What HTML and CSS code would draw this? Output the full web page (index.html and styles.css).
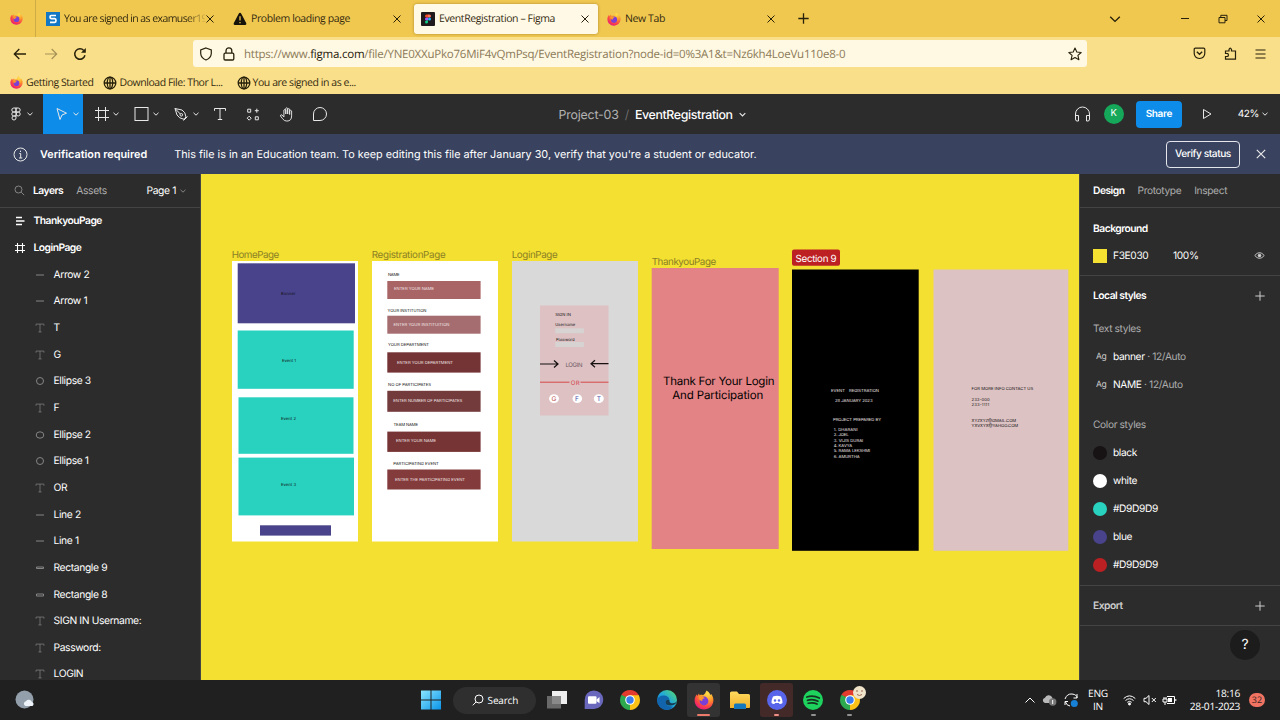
FILE: index.html
```html
<!DOCTYPE html>
<html lang="en">
<head>
<meta charset="utf-8">
<title>EventRegistration – Figma</title>
<link rel="stylesheet" href="styles.css">
</head>
<body>
<svg class="sprite" width="0" height="0">
  <defs>
    <radialGradient id="fxg" cx=".7" cy=".15" r=".95"><stop offset="0" stop-color="#ffe14a"/><stop offset=".4" stop-color="#ff9a2a"/><stop offset=".75" stop-color="#fb3f48"/><stop offset="1" stop-color="#e31587"/></radialGradient>
    <linearGradient id="wing" x1="0" y1="0" x2="1" y2="1"><stop offset="0" stop-color="#8ae6ff"/><stop offset="1" stop-color="#0a94e8"/></linearGradient>
    <linearGradient id="edgeg" x1="0" y1="1" x2="1" y2="0"><stop offset="0" stop-color="#0c59a4"/><stop offset=".5" stop-color="#1fa6dd"/><stop offset="1" stop-color="#5ade6a"/></linearGradient>
    <linearGradient id="foldg" x1="0" y1="0" x2="0" y2="1"><stop offset="0" stop-color="#ffd95e"/><stop offset="1" stop-color="#f2b32c"/></linearGradient>
  </defs>
  <symbol id="firefox" viewBox="0 0 20 20"><path d="M10 19.5C4.600 19.500.6 15.500.6 10.300.6 7.800 1.600 5.600 2.800 4.200L3.100 6 5 3.500 5.600 5.200C7 4.700 8 4.800 9 5.300L11 3.500 12.500.4C15.500 2.200 16 4 16.400 5L17.300 4C19 6.500 19.500 8.600 19.400 10.500 19.200 15.700 15.200 19.500 10 19.500Z" fill="url(#fxg)"/><circle cx="10" cy="11" r="4.400" fill="#7b3fd6"/><path d="M4.500 6.500C7 5.800 9.500 7 11 8.200 8.800 8.300 8 9.500 8.300 11 6.500 11 4.500 9 4.500 6.500Z" fill="#ff9429"/></symbol>
  <symbol id="x" viewBox="0 0 10 10"><path d="M1.500 1.500l7 7M8.500 1.500l-7 7"/></symbol>
  <symbol id="plus" viewBox="0 0 10 10"><path d="M5 .3v9.400M.3 5h9.400"/></symbol>
  <symbol id="chev" viewBox="0 0 8 8"><path d="M1.500 2.800L4 5.200l2.500-2.400"/></symbol>
  <symbol id="globe" viewBox="0 0 14 14"><circle cx="7" cy="7" r="5.800"/><ellipse cx="7" cy="7" rx="2.700" ry="5.800"/><path d="M1.200 7h11.600M7 1.200v11.600"/></symbol>
  <symbol id="text" viewBox="0 0 14 14"><path d="M1.500 3.800V1.500h11v2.300M7 1.500v11M4.800 12.500h4.400"/></symbol>
  <symbol id="frame" viewBox="0 0 14 14"><path d="M3.500 0v14M10.500 0v14M0 3.500h14M0 10.500h14"/></symbol>
  <symbol id="chrome" viewBox="0 0 20 20"><path d="M10 10L1.340 5A10 10 0 0 1 18.660 5Z" fill="#e33b2e"/><path d="M10 10L18.660 5A10 10 0 0 1 10 20Z" fill="#fbc116"/><path d="M10 10L10 20A10 10 0 0 1 1.340 5Z" fill="#2da94f"/><path d="M10 5.300H18.800L14 12.400 10 20 14 12Z" fill="#fbc116"/><path d="M6 12.500L1.340 5 6 7Z" fill="#2da94f"/><circle cx="10" cy="10" r="4.800" fill="#fff"/><circle cx="10" cy="10" r="3.700" fill="#3b7ded"/></symbol>
</svg>

<header class="browser">
  <div class="tabs">
    <div class="pinned"><svg width="13" height="13"><use href="#firefox"/></svg></div>
    <div class="tab"><svg width="14" height="14" viewBox="0 0 14 14"><rect width="14" height="14" fill="#1277c4"/><path d="M10 3.500H5.300Q4 3.500 4 5t1.300 1.700h3.400Q10 6.800 10 8.600t-1.300 1.800H4" fill="none" stroke="#fff" stroke-width="1.700"/></svg><span class="tab-title fade">You are signed in as examuser19</span><svg class="ln close" width="10" height="10"><use href="#x"/></svg></div>
    <div class="tab"><svg width="14" height="14" viewBox="0 0 14 14"><path d="M7 .8Q7.800.8 8.300 1.800L13.300 11.300Q13.800 13 12.200 13H1.800Q.2 13 .7 11.300L5.700 1.800Q6.200.8 7 .8Z" fill="#17130a"/><path d="M7 4.300v4.200M7 10v1.300" stroke="#f2c84e" stroke-width="1.300"/></svg><span class="tab-title">Problem loading page</span><svg class="ln close" width="10" height="10"><use href="#x"/></svg></div>
    <div class="tab active"><svg width="14" height="14" viewBox="0 0 14 14"><rect width="14" height="14" rx="1" fill="#211a1c"/><path d="M5.500 2.500H7v3H5.500a1.500 1.500 0 0 1 0-3Z" fill="#f24e1e"/><path d="M7 2.500h1.500a1.500 1.500 0 0 1 0 3H7Z" fill="#ff7262"/><path d="M5.500 5.500H7v3H5.500a1.500 1.500 0 0 1 0-3Z" fill="#a259ff"/><circle cx="8.500" cy="7" r="1.500" fill="#1abcfe"/><path d="M5.500 8.500H7V10a1.500 1.500 0 1 1-1.500-1.500Z" fill="#0acf83"/></svg><span class="tab-title">EventRegistration – Figma</span><svg class="ln close" width="10" height="10"><use href="#x"/></svg></div>
    <div class="tab"><svg width="14" height="14"><use href="#firefox"/></svg><span class="tab-title">New Tab</span><svg class="ln close" width="10" height="10"><use href="#x"/></svg></div>
    <svg class="ln newtab" width="11" height="11"><use href="#plus"/></svg>
    <div class="window-controls">
      <svg class="ln" width="12" height="12" viewBox="0 0 12 12"><path d="M1.200 3.800L6 8.400l4.800-4.600" stroke-width="1.400"/></svg>
      <svg class="ln" width="10" height="10" viewBox="0 0 10 10"><path d="M1 4.500h8"/></svg>
      <svg class="ln" width="10" height="10" viewBox="0 0 10 10"><path d="M1 3.500h6v5.300H1zM2.800 3.500V1.300H9v5.200H7"/></svg>
      <svg class="ln" width="10" height="10"><use href="#x"/></svg>
    </div>
  </div>
  <div class="nav">
    <svg class="ln back" width="14" height="14" viewBox="0 0 14 14"><path d="M13 7H1.500M6.300 2L1.300 7l5 5" stroke-width="1.300"/></svg>
    <svg class="ln fwd" width="14" height="14" viewBox="0 0 14 14"><path d="M1 7h11.500M7.700 2l5 5-5 5" stroke-width="1.200"/></svg>
    <svg class="ln reload" width="14" height="14" viewBox="0 0 14 14"><path d="M12 8.300A5.200 5.200 0 1 1 10.800 3.500" stroke-width="1.500"/><path d="M12.800 1v4.700H8Z" fill="#27200a" stroke="none"/></svg>
    <div class="urlbar">
      <svg class="ln" width="14" height="14" viewBox="0 0 14 14"><path d="M7 1L12.300 3V6.500Q12 11 7 13 2 11 1.700 6.500V3Z" stroke-width="1.200"/></svg>
      <svg class="ln lock" width="12" height="14" viewBox="0 0 12 14"><rect x="1" y="6.200" width="9.800" height="6.800" rx="1.200" stroke-width="1.300"/><path d="M3 6V3.800a2.900 2.900 0 0 1 5.800 0V6" stroke-width="1.300"/></svg>
      <span class="url">https://www.<b>figma.com</b>/file/YNE0XXuPko76MiF4vQmPsq/EventRegistration?node-id=0%3A1&amp;t=Nz6kh4LoeVu110e8-0</span>
      <svg class="ln star" width="14" height="14" viewBox="0 0 14 14"><path d="M7 1l1.800 4 4.400.5-3.300 2.900 1 4.300L7 10.500l-3.900 2.200 1-4.300L.8 5.500 5.200 5Z" stroke-width="1.100" stroke-linejoin="round"/></svg>
    </div>
    <div class="nav-tools">
      <svg class="ln" width="13" height="13" viewBox="0 0 13 13"><path d="M1.200 2.300Q1.200 1.200 2.300 1.200h8.400Q11.800 1.200 11.800 2.300V6q0 5-5.300 5.500Q1.200 11 1.200 6Z" stroke-width="1.200"/><path d="M3.800 4.800l2.700 2.500 2.700-2.500" stroke-width="1.400"/></svg>
      <svg class="ln" width="13" height="13" viewBox="0 0 13 13"><path d="M1.500 12.200V9.500H3.800q1.400-1.500 0-3H1.500V4H5V2.500q1.200-2.800 2.500 0V4h4v8.200Z" stroke-width="1.200"/></svg>
      <svg class="ln" width="11" height="12" viewBox="0 0 11 12"><path d="M.5 2h10M.5 6h10M.5 10h10" stroke-width="1.100"/></svg>
    </div>
  </div>
  <div class="bookmarks">
    <svg width="13" height="13"><use href="#firefox"/></svg><span>Getting Started</span>
    <svg class="ln globe" width="14" height="14"><use href="#globe"/></svg><span>Download File: Thor L...</span>
    <svg class="ln globe last" width="14" height="14"><use href="#globe"/></svg><span>You are signed in as e...</span>
  </div>
</header>

<div class="toolbar">
  <div class="tool menu"><svg width="16" height="16" viewBox="0 0 16 16"><path d="M8 2H5.800a2 2 0 0 0 0 4H8ZM8 2h2.200a2 2 0 0 1 0 4H8ZM8 6H5.800a2 2 0 0 0 0 4H8ZM8 10H5.800A2 2 0 1 0 8 12Z"/><circle cx="10.200" cy="8" r="2"/></svg><svg class="cv" width="8" height="8"><use href="#chev"/></svg></div>
  <div class="tool selected"><svg width="16" height="16" viewBox="0 0 16 16"><path d="M3 2.500L12.500 7.200 8 9 6 13.500Z"/></svg><svg class="cv" width="8" height="8"><use href="#chev"/></svg></div>
  <div class="tool"><svg width="14" height="14"><use href="#frame"/></svg><svg class="cv" width="8" height="8"><use href="#chev"/></svg></div>
  <div class="tool"><svg width="16" height="16" viewBox="0 0 16 16"><rect x="1" y="1.500" width="13" height="13"/></svg><svg class="cv" width="8" height="8"><use href="#chev"/></svg></div>
  <div class="tool"><svg width="16" height="16" viewBox="0 0 16 16"><path d="M1 2.500L8 4Q11.500 6 12 11L10 13.300Q5 12.500 3 9ZM1 2.500l5.500 5.700M13.500 10.500l-4 4"/><circle cx="7.300" cy="8.800" r="1.300"/></svg><svg class="cv" width="8" height="8"><use href="#chev"/></svg></div>
  <div class="tool solo"><svg width="14" height="14"><use href="#text"/></svg></div>
  <div class="tool solo"><svg width="13" height="13" viewBox="0 0 13 13"><path d="M1.200 1.200h3v3h-3zM8.800 8.800h3v3h-3zM10.300.7v4M8.300 2.700h4M2.700 8.200L4.700 10.200 2.700 12.200.7 10.200Z"/></svg></div>
  <div class="tool solo"><svg width="17" height="17" viewBox="0 0 17 17"><path d="M5.200 11.200V3.800q1-1.300 2 0V8V2q1-1.300 2 0V8V2.800q1.200-1.200 2.100 0V8.500V4.500q1.200-1.100 2.100.2V10q0 5.500-5 5.500Q5.500 15.500 3.800 13L1.500 10q0-1.300 1.500-1.200l2.200 2.400"/></svg></div>
  <div class="tool solo"><svg width="16" height="16" viewBox="0 0 16 16"><path d="M1.500 14.500V8A6.500 6.500 0 1 1 8 14.500Z"/></svg></div>
  <div class="filename"><span class="project">Project-03</span><span class="slash">/</span><span class="doc">EventRegistration</span><svg class="cv" width="9" height="9"><use href="#chev"/></svg></div>
  <div class="actions">
    <svg width="17" height="17" viewBox="0 0 17 17"><path d="M1.500 13V8a7 7 0 0 1 14 0v5M1.500 9.500h3V15h-1.500q-1.500 0-1.500-2ZM15.500 9.500h-3V15H14q1.500 0 1.500-2Z"/></svg>
    <span class="avatar">K</span>
    <span class="share">Share</span>
    <svg class="play" width="12" height="12" viewBox="0 0 12 12"><path d="M2.500 1.500L10 6l-7.500 4.500Z"/></svg>
    <span class="zoom">42%</span><svg class="cv" width="8" height="8"><use href="#chev"/></svg>
  </div>
</div>

<div class="notice">
  <svg width="15" height="15" viewBox="0 0 15 15"><circle cx="7.500" cy="7.500" r="6.500"/><path d="M6.300 6.500h1.400V11M6 11h3.300M7.500 3.700v1.300"/></svg>
  <strong>Verification required</strong>
  <span class="notice-text">This file is in an Education team. To keep editing this file after January 30, verify that you're a student or educator.</span>
  <span class="verify">Verify status</span>
  <svg class="dismiss" width="12" height="12"><use href="#x"/></svg>
</div>

<main class="workspace">
  <aside class="layers">
    <div class="layers-head"><svg width="11" height="11" viewBox="0 0 11 11"><circle cx="4.500" cy="4.500" r="3.500"/><path d="M7.200 7.200l3 3"/></svg><b>Layers</b><span class="dim">Assets</span><span class="page">Page 1</span><svg width="8" height="8"><use href="#chev"/></svg></div>
    <div class="layer top"><svg width="10" height="10" viewBox="0 0 10 10"><path d="M1 1.500h6M1 5h8.500M1 8.500h6" stroke-width="1.400"/></svg>ThankyouPage</div>
    <div class="layer top"><svg width="10" height="10"><use href="#frame"/></svg>LoginPage</div>
    <div class="layer"><svg width="10" height="10" viewBox="0 0 10 10"><path d="M1 5h8"/></svg>Arrow 2</div>
    <div class="layer"><svg width="10" height="10" viewBox="0 0 10 10"><path d="M1 5h8"/></svg>Arrow 1</div>
    <div class="layer"><svg width="10" height="10"><use href="#text"/></svg>T</div>
    <div class="layer"><svg width="10" height="10"><use href="#text"/></svg>G</div>
    <div class="layer"><svg width="10" height="10" viewBox="0 0 10 10"><circle cx="5" cy="5" r="3.500"/></svg>Ellipse 3</div>
    <div class="layer"><svg width="10" height="10"><use href="#text"/></svg>F</div>
    <div class="layer"><svg width="10" height="10" viewBox="0 0 10 10"><ellipse cx="5" cy="5" rx="3.800" ry="3.200"/></svg>Ellipse 2</div>
    <div class="layer"><svg width="10" height="10" viewBox="0 0 10 10"><circle cx="5" cy="5" r="3.500"/></svg>Ellipse 1</div>
    <div class="layer"><svg width="10" height="10"><use href="#text"/></svg>OR</div>
    <div class="layer"><svg width="10" height="10" viewBox="0 0 10 10"><path d="M1 5h8"/></svg>Line 2</div>
    <div class="layer"><svg width="10" height="10" viewBox="0 0 10 10"><path d="M1 5h8"/></svg>Line 1</div>
    <div class="layer"><svg width="10" height="10" viewBox="0 0 10 10"><path d="M1.500 4h7v1.500h-7z"/></svg>Rectangle 9</div>
    <div class="layer"><svg width="10" height="10" viewBox="0 0 10 10"><path d="M1.500 4h7v2h-7z"/></svg>Rectangle 8</div>
    <div class="layer"><svg width="10" height="10"><use href="#text"/></svg>SIGN IN Username:</div>
    <div class="layer"><svg width="10" height="10"><use href="#text"/></svg>Password:</div>
    <div class="layer"><svg width="10" height="10"><use href="#text"/></svg>LOGIN</div>
  </aside>

  <svg class="canvas" width="878" height="506" viewBox="201 174 878 506">
    <g class="frame-label">
      <text x="231.700" y="258" textLength="47.500">HomePage</text>
      <text x="371.700" y="258" textLength="74">RegistrationPage</text>
      <text x="511.700" y="258" textLength="46">LoginPage</text>
      <text x="651.700" y="265.300" textLength="64.500">ThankyouPage</text>
    </g>
    <g>
      <rect class="white" x="232" y="261" width="126" height="280.500"/>
      <rect class="blue" x="237.700" y="263.300" width="117.300" height="60"/>
      <rect class="teal" x="237.700" y="330.500" width="116" height="58.300"/>
      <rect class="teal" x="238.500" y="397.300" width="115" height="56.500"/>
      <rect class="teal" x="238.500" y="457.600" width="115.500" height="57.800"/>
      <rect class="blue" x="260" y="525.300" width="71" height="10.300"/>
      <g class="tiny dark"><text x="281" y="295.300" textLength="14.500">Banner</text><text x="282" y="361.500" textLength="14">Event 1</text><text x="281" y="419.600" textLength="15">Event 2</text><text x="281" y="486" textLength="15">Event 3</text></g>
    </g>
    <g>
      <rect class="white" x="372" y="261" width="126" height="280.500"/>
      <rect x="387.300" y="281" width="93.300" height="18" fill="#a96466"/>
      <rect x="387.300" y="315.700" width="93.300" height="18" fill="#a66d70"/>
      <rect x="387.300" y="352.300" width="93.300" height="20.300" fill="#743334"/>
      <rect x="387.300" y="390.800" width="93.300" height="21" fill="#743b3c"/>
      <rect x="387.300" y="431.600" width="93.300" height="20.300" fill="#763435"/>
      <rect x="387.300" y="469.500" width="93.300" height="20" fill="#843b3c"/>
      <g class="tiny dark">
        <text x="388" y="276" textLength="11.500">NAME</text>
        <text x="387.500" y="311.500" textLength="39">YOUR INSTITUTION</text>
        <text x="388" y="346.300" textLength="41">YOUR DEPARTMENT</text>
        <text x="388" y="385.500" textLength="43">NO OF PARTICIPATES</text>
        <text x="393.500" y="425.800" textLength="24.500">TEAM NAME</text>
        <text x="393.300" y="465.200" textLength="45.500">PARTICIPATING EVENT</text>
      </g>
      <g class="tiny light">
        <text x="394" y="290.400" textLength="40">ENTER YOUR NAME</text>
        <text x="393.500" y="326.400" textLength="56">ENTER YOUR INSTITUITION</text>
        <text x="397" y="364" textLength="56">ENTER YOUR DEPARTMENT</text>
        <text x="393.300" y="401.500" textLength="69">ENTER NUMBER OF PARTICIPATES</text>
        <text x="396" y="442.300" textLength="40">ENTER YOUR NAME</text>
        <text x="395" y="481" textLength="70">ENTER THE PARTICIPATING EVENT</text>
      </g>
    </g>
    <g>
      <rect x="512" y="261" width="126" height="280.500" fill="#d9d9d9"/>
      <rect x="540" y="305.500" width="68.500" height="110" fill="#ddc1c3"/>
      <rect x="555.300" y="328.300" width="28.600" height="5" fill="#d6d3d2"/>
      <rect x="555.300" y="342" width="28.600" height="5" fill="#d6d3d2"/>
      <g class="tiny dark"><text x="555.300" y="316.200" textLength="15.500">SIGN IN</text><text x="555.300" y="326.200" textLength="20">Username</text><text x="556" y="341" textLength="18.500">Password</text></g>
      <path class="arrow" d="M540 364h18M554 360.500l4 3.500-4 3.500M608.500 363.700h-17.500M595 360.200l-4 3.600 4 3.500"/>
      <text class="login" x="565.500" y="366.700" textLength="17">LOGIN</text>
      <path d="M540 382.200h29.500M580.500 382.200h28" stroke="#d6474b"/>
      <text class="or" x="570.700" y="384.700" textLength="9">OR</text>
      <g class="white"><ellipse cx="554" cy="398.600" rx="5" ry="4.300"/><ellipse cx="577.300" cy="398.600" rx="4.800" ry="4.300"/><ellipse cx="598.800" cy="398.600" rx="5" ry="4.300"/></g>
      <g class="social"><text x="554" y="401" fill="#bd4649">G</text><text x="577" y="401" fill="#4848a6">F</text><text x="598.800" y="401" fill="#4848a6">T</text></g>
    </g>
    <g>
      <rect x="651.700" y="268" width="127" height="281" fill="#e38385"/>
      <g class="thanks"><text x="663" y="384.800" textLength="111.500">Thank For Your Login</text><text x="672.300" y="398.600" textLength="91">And Participation</text></g>
    </g>
    <g>
      <rect x="792" y="269.500" width="126.700" height="281.300"/>
      <rect x="792" y="249.500" width="48" height="16.300" rx="2" fill="#bd2023"/>
      <text class="section" x="795.600" y="261.600" textLength="41">Section 9</text>
      <g class="tiny light">
        <text x="831" y="391.800" textLength="14">EVENT</text><text x="849" y="391.800" textLength="30">REGISTRATION</text>
        <text x="835" y="402.200" textLength="37.500">28 JANUARY 2023</text>
        <text x="833" y="420.800" textLength="48">PROJECT PREPARED BY</text>
        <text x="833.700" y="431" textLength="24">1. DHARANI</text>
        <text x="833.700" y="436.300" textLength="15">2. JOEL</text>
        <text x="833.700" y="441.600" textLength="29.500">3. VIJIS DURAI</text>
        <text x="833.700" y="446.900" textLength="18.500">4. KAVYA</text>
        <text x="833.700" y="452.200" textLength="36.500">5. RAMA LEKSHMI</text>
        <text x="833.700" y="457.500" textLength="26">6. AMURTHA</text>
      </g>
    </g>
    <g>
      <rect x="933.500" y="269.500" width="134.800" height="281.300" fill="#ddc2c3"/>
      <g class="tiny dark">
        <text x="971.600" y="390" textLength="61.500">FOR MORE INFO CONTACT US</text>
        <text x="971.600" y="400.600" textLength="18">233-000</text>
        <text x="971.600" y="405.900" textLength="17.500">233-1111</text>
        <text x="971.600" y="421.500" textLength="44.500">XYZXYZ@GMAIL.COM</text>
        <text x="971.600" y="426.800" textLength="46.500">YXVXYX@YAHOO.COM</text>
      </g>
    </g>
  </svg>

  <aside class="props">
    <div class="props-head"><b>Design</b><span>Prototype</span><span>Inspect</span></div>
    <section class="bg">
      <div class="row"><b>Background</b></div>
      <div class="row"><i class="chip"></i><span class="hex">F3E030</span><span>100%</span><svg class="end" width="11" height="11" viewBox="0 0 12 12"><path d="M.8 6Q6-.3 11.200 6 6 12.300.8 6Z"/><circle cx="6" cy="6" r="1.500" fill="#ddd"/></svg></div>
    </section>
    <section class="styles">
      <div class="row tall"><b>Local styles</b><svg class="end" width="10" height="10"><use href="#plus"/></svg></div>
      <div class="row dim">Text styles</div>
      <div class="row"><span class="ag">Ag</span>banner<span class="dim">&nbsp;· 12/Auto</span></div>
      <div class="row"><span class="ag">Ag</span>NAME<span class="dim">&nbsp;· 12/Auto</span></div>
      <div class="row dim colors">Color styles</div>
      <div class="row"><i class="dot d-black"></i>black</div>
      <div class="row"><i class="dot d-white"></i>white</div>
      <div class="row"><i class="dot d-teal"></i>#D9D9D9</div>
      <div class="row"><i class="dot d-blue"></i>blue</div>
      <div class="row"><i class="dot d-red"></i>#D9D9D9</div>
    </section>
    <section class="export"><div class="row"><b>Export</b><svg class="end" width="10" height="10"><use href="#plus"/></svg></div></section>
    <div class="help">?</div>
  </aside>
</main>

<footer class="taskbar">
  <svg class="weather" width="20" height="20" viewBox="0 0 20 20"><circle cx="9.500" cy="9.500" r="9" fill="#93a0ab"/><path d="M10.500 16a2.500 2.500 0 0 1 .5-4.800 3.500 3.500 0 0 1 6 .8 2.200 2.200 0 0 1 .5 4Z" fill="#edf3f8"/></svg>
  <div class="apps">
    <div class="app"><svg width="20" height="20" viewBox="0 0 20 20"><path d="M0 .5h9.500v9H0zM10.500.5H20v9h-9.500zM0 10.500h9.500v9H0zM10.500 10.500H20v9h-9.500z" fill="url(#wing)"/></svg></div>
    <div class="search"><svg width="12" height="12" viewBox="0 0 12 12"><circle cx="7" cy="5" r="4"/><path d="M4 8L.8 11.300"/></svg>Search</div>
    <div class="app"><svg width="20" height="20" viewBox="0 0 20 20"><rect x="5" y="1" width="15" height="13" fill="#eee"/><rect y="6" width="14" height="12.500" fill="#777" opacity=".85"/></svg></div>
    <div class="app"><svg width="20" height="20" viewBox="0 0 20 20"><path d="M.7 19V10A9.300 9.300 0 1 1 10 19Z" fill="#6a68bd"/><rect x="4" y="6.300" width="8.500" height="7.500" rx="1" fill="#fff"/><path d="M12.500 9.500L15.500 7v6.200L12.500 11Z" fill="#fff"/></svg></div>
    <div class="app"><svg width="20" height="20"><use href="#chrome"/></svg></div>
    <div class="app"><svg width="20" height="20" viewBox="0 0 20 20"><circle cx="10" cy="10" r="10" fill="url(#edgeg)"/><path d="M0 10Q2 5 7.500 5.500 12 6 12.500 10 9 9 8.500 12 9 17 16 16.500 13 20.500 8.500 20 1 18 0 10Z" fill="#1264ad"/><path d="M12.500 10Q9 9 8.500 12q.5 4 5 3.500 5 0 6.300-4-1.800 2.300-5.300 1.700-2.500-.7-2-3.200Z" fill="#173d55"/></svg></div>
    <div class="app on"><svg width="20" height="20"><use href="#firefox"/></svg><i class="bar wide"></i></div>
    <div class="app"><svg width="20" height="20" viewBox="0 0 20 20"><path d="M0 3q0-1.500 1.500-1.500H7L9 4h9.500Q20 4 20 5.500V17q0 1-1 1H0Z" fill="url(#foldg)"/><path d="M4 19v-4q0-1.500 1.500-1.500h9Q16 13.500 16 15v4Z" fill="#1577bd"/></svg></div>
    <div class="app alert"><svg width="20" height="20" viewBox="0 0 20 20"><circle cx="10" cy="10" r="10" fill="#5865ea"/><path d="M6 6.500Q10 5 14 6.500 15.700 10 15.500 13 14 14.300 12.500 14L12 13H8L7.500 14Q6 14.300 4.500 13 4.300 10 6 6.500Z" fill="#fff"/><circle cx="8" cy="10.500" r="1.200" fill="#5865ea"/><circle cx="12" cy="10.500" r="1.200" fill="#5865ea"/></svg><i class="bar pink"></i></div>
    <div class="app"><svg width="20" height="20" viewBox="0 0 20 20"><circle cx="10" cy="10" r="10" fill="#1ed25e"/><path d="M3.800 7Q10 4.800 16.300 8M4.500 10.300Q10 8.500 15 11.200M5.200 13.300Q10 12 14 14" fill="none" stroke="#15331f" stroke-width="1.700" stroke-linecap="round"/></svg><i class="bar"></i></div>
    <div class="app"><svg width="20" height="20"><use href="#chrome"/></svg><svg class="face" width="13" height="13" viewBox="0 0 13 13"><circle cx="6.500" cy="6.500" r="6.500" fill="#efe3ca"/><path d="M3 5h2M8 5h2M4 8.500q2.500 2 5 0" stroke="#9b6b50" fill="none"/></svg><i class="bar"></i></div>
  </div>
  <div class="tray">
    <svg width="12" height="12" viewBox="0 0 12 12"><path d="M1.500 8.500L6 4l4.500 4.500"/></svg>
    <svg width="15" height="14" viewBox="0 0 15 14"><path d="M3 10a2.700 2.700 0 0 1 0-5.300A4 4 0 0 1 10 4l2 6Z" fill="#b9b9b9" stroke="none"/><circle cx="10.700" cy="9" r="3.700" fill="#777" stroke="none"/><path d="M10.700 7v4"/></svg>
    <svg width="14" height="16" viewBox="0 0 14 16"><path d="M1 7Q3 1.500 8 2t5 4M13 2v4H9.500M1.500 10q1 3.500 4.500 4M1 13v-3.500h3"/><circle cx="10.300" cy="11.500" r="3.500" fill="#1781d8" stroke="none"/></svg>
    <div class="lang">ENG<br>IN</div>
    <svg width="13" height="12" viewBox="0 0 13 12"><path d="M.7 4.500Q6.500-.8 12.300 4.500M2.500 6.500q4-3.500 8 0M4.300 8.300q2.200-1.800 4.400 0"/><circle cx="6.500" cy="10" r="1" fill="#fff"/></svg>
    <svg class="mute" width="14" height="12" viewBox="0 0 14 12"><path d="M1 4.300h2L6 1.500v9L3 7.700H1ZM8.800 4l4 4M12.800 4l-4 4"/></svg>
    <svg width="15" height="12" viewBox="0 0 15 12"><path d="M5 2.500h7.500v7H5M13.800 5v2M1 5h4v3H1ZM2 3v2M4 3v2M3 8v3"/><path d="M6 4h4v4H6z" fill="#fff" stroke="none"/></svg>
    <div class="clock">18:16<br>28-01-2023</div>
    <span class="badge">32</span>
  </div>
</footer>
</body>
</html>
```
FILE: styles.css
```css
* { box-sizing: border-box; }
body { margin: 0; width: 1280px; height: 720px; overflow: hidden; display: flex; flex-direction: column; font-family: Inter, "Liberation Sans", sans-serif; background: #2c2c2c; text-rendering: geometricPrecision; }
svg { display: block; flex: none; }
b { font-weight: 600; }
.sprite { position: absolute; }

.browser { font-family: "Open Sans", "Noto Sans", sans-serif; color: #33290f; flex: none; }
.ln { fill: none; stroke: #27200a; stroke-width: 1; }
.tabs { height: 37px; display: flex; align-items: center; background: #f0c850; }
.pinned { width: 36px; height: 37px; margin-right: 3px; padding-left: 10px; display: flex; align-items: center; border-right: 1px solid #cdab45; }
.tab { width: 185px; height: 30px; margin-right: 2px; padding-left: 7px; display: flex; align-items: center; gap: 4px; border-radius: 3px; }
.tab.active { width: 184px; margin-left: 1px; background: #fff9e6; box-shadow: 0 0 3px #a8862c; }
.tab-title { width: 137px; padding-top: 1px; font-size: 10.500px; white-space: nowrap; letter-spacing: -.4px; }
.fade { width: 141px; margin-right: -4px; letter-spacing: -.58px; -webkit-mask-image: linear-gradient(90deg, #000 122px, #0002 141px); mask-image: linear-gradient(90deg, #000 122px, #0002 141px); }
.newtab { margin-left: 11px; stroke-width: 1.200; }
.window-controls { margin-left: auto; margin-right: 14px; display: flex; align-items: center; gap: 28px; }
.window-controls svg:first-child { margin-right: 31px; }
.nav { height: 33px; display: flex; align-items: center; background: #fadf8a; }
.back { margin-left: 13px; }
.fwd { margin-left: 17px; opacity: .4; }
.reload { margin-left: 15px; }
.urlbar { width: 894px; height: 27px; margin-left: 106px; padding: 0 5px 0 6px; display: flex; align-items: center; background: #fff8e3; border-radius: 3px; }
.lock { margin-left: 10px; }
.url { margin-left: 9px; font-size: 11.500px; color: #8b7a58; white-space: nowrap; letter-spacing: -.23px; padding-top: 2px; }
.url b { font-weight: 400; color: #1f190c; }
.star { margin-left: auto; }
.nav-tools { margin-left: auto; margin-right: 14px; display: flex; align-items: center; gap: 18px; }
.bookmarks { height: 24px; padding: 1px 0 0 10px; display: flex; align-items: center; background: #fadf8a; font-size: 10.500px; letter-spacing: -.45px; white-space: nowrap; }
.bookmarks span { margin-left: 3px; padding-top: 1px; }
.globe { margin-left: 10px; stroke-width: 1.300; }
.globe.last { margin-left: 14px; }
.globe + span { margin-left: 2px; }

.toolbar { height: 40px; flex: none; display: flex; align-items: center; background: #2c2c2c; color: #fff; }
.toolbar svg, .notice svg { fill: none; stroke: #e8e8e8; }
.tool { width: 40px; height: 40px; padding-left: 11px; display: flex; align-items: center; gap: 2px; }
.tool > svg:first-child { width: 16px; }
.menu { width: 43px; padding-left: 8px; }
.selected { background: #0d8ce9; }
.solo { width: 33.400px; padding-left: 9px; }
.filename { margin-left: 222px; display: flex; align-items: center; font-size: 12.400px; letter-spacing: -.2px; white-space: nowrap; }
.project { color: #b3b3b3; }
.slash { color: #6b6b6b; margin: 0 6px; }
.doc { font-weight: 500; letter-spacing: -.38px; }
.filename .cv { margin-left: 5px; }
.actions { margin-left: auto; margin-right: 11px; display: flex; align-items: center; font-size: 11px; }
.avatar { width: 20px; height: 20px; margin-left: 13px; border-radius: 50%; background: #15a85a; text-align: center; line-height: 20px; font-size: 9.500px; }
.share { width: 46px; height: 27px; margin-left: 12px; border-radius: 4px; background: #0d8ce9; text-align: center; line-height: 27px; font-weight: 600; font-size: 10px; letter-spacing: -.35px; }
.play { margin-left: 19px; }
.zoom { margin-left: 25px; font-size: 10px; letter-spacing: -.4px; }
.actions .cv { margin-left: 2px; }

.notice { height: 40px; flex: none; padding-left: 13px; display: flex; align-items: center; background: #394360; color: #fff; font-size: 10.830px; white-space: nowrap; }
.notice strong { margin-left: 12px; font-weight: 600; }
.notice-text { margin-left: 27px; }
.verify { width: 74px; height: 27px; margin-left: auto; border: 1px solid #e4e6ec; border-radius: 4px; text-align: center; line-height: 25px; font-size: 10.200px; font-weight: 500; letter-spacing: -.45px; }
.dismiss { margin: 0 13px 0 15px; }

.workspace { height: 506px; flex: none; display: flex; }
.layers { width: 201px; overflow: hidden; background: #2c2c2c; border-right: 1px solid #444; color: #fff; font-size: 10.300px; letter-spacing: -.37px; }
.layers svg { fill: none; stroke: #858585; stroke-width: 1; }
.layers-head { height: 33.500px; padding: 1px 13px 0 14px; display: flex; align-items: center; border-bottom: 1px solid #444; }
.layers-head b { margin-left: 8px; font-size: 10.300px; letter-spacing: -.5px; }
.layers-head .dim { margin-left: 13px; }
.page { margin-left: auto; margin-right: 3px; }
.dim { color: #adadad; }
.layer { height: 26.670px; padding: 1px 0 0 35px; display: flex; align-items: center; gap: 8.500px; white-space: nowrap; }
.layer.top { padding-left: 15px; font-weight: 600; font-size: 10.300px; letter-spacing: -.52px; }
.layer.top svg { stroke: #fff; stroke-width: 1.500; }

.canvas { width: 878px; height: 506px; background: #f3e030; }
.frame-label text { font-size: 9.800px; fill: #8b7f26; }
.white { fill: #fff; }
.blue { fill: #49438b; }
.teal { fill: #28d2bf; }
.tiny text { font-size: 4.200px; }
.dark { fill: #111; }
.light { fill: #f1e6e6; }
.arrow { fill: none; stroke: #161010; stroke-width: 1.200; }
.login { font-size: 6px; fill: #705b63; }
.or { font-size: 6px; fill: #d6474b; }
.social text { font-size: 6.500px; text-anchor: middle; }
.thanks text { font-size: 11.500px; }
.section { font-size: 9.800px; fill: #fff; }

.props { position: relative; flex: 1; background: #2c2c2c; color: #fff; font-size: 10.200px; letter-spacing: -.37px; border-left: 1px solid #444; white-space: nowrap; }
.props b { font-size: 10.300px; letter-spacing: -.52px; }
.props svg { fill: none; stroke: #ccc; }
.props-head { height: 33.500px; padding: 1px 0 0 13px; display: flex; align-items: center; gap: 13px; border-bottom: 1px solid #444; color: #adadad; }
.props-head b { color: #fff; }
.row { height: 28px; padding: 1px 15px 0 13px; display: flex; align-items: center; }
.bg { height: 68px; padding-top: 6.500px; border-bottom: 1px solid #444; }
.bg .row + .row { height: 26px; }
.chip { width: 14px; height: 14px; background: #f3e030; margin-right: 6px; }
.hex { width: 60px; }
.end { margin-left: auto; }
.tall { height: 39px; }
.styles { height: 310px; border-bottom: 1px solid #444; }
.row.colors { margin-top: 12px; }
.ag { width: 20px; padding-left: 3px; font-size: 8.500px; color: #ccc; }
.dot { width: 14px; height: 14px; margin-right: 6px; border-radius: 50%; }
.d-black { background: #171213; }
.d-white { background: #fff; }
.d-teal { background: #28d2bf; }
.d-blue { background: #49438b; }
.d-red { background: #bd2023; }
.export { height: 40px; padding-top: 6px; border-bottom: 1px solid #444; color: #ccc; }
.help { position: absolute; right: 20px; bottom: 20px; width: 30px; height: 30px; border-radius: 50%; background: #1c1c1c; text-align: center; line-height: 30px; font-size: 14px; }

.taskbar { height: 40px; flex: none; display: flex; align-items: center; background: #202020; color: #fff; font-family: "Open Sans", "Noto Sans", sans-serif; }
.weather { margin-left: 15px; }
.apps { margin-left: 379px; display: flex; align-items: center; gap: 3.600px; }
.app { position: relative; width: 33px; height: 34px; display: flex; align-items: center; justify-content: center; border-radius: 3px; }
.search { width: 83px; height: 27px; margin: 0 1.500px 0 2px; padding-left: 19px; display: flex; align-items: center; gap: 4px; border-radius: 14px; background: #2f2f2f; font-size: 10px; letter-spacing: -.2px; }
.search svg, .tray svg { fill: none; stroke: #fff; }
.on { background: #333; }
.alert { background: #432a29; }
.bar { position: absolute; left: 14px; bottom: 1px; width: 5px; height: 2px; border-radius: 1px; background: #929292; }
.bar.wide { left: 10px; width: 13px; background: #ed7b6c; }
.bar.pink { background: #ed8f85; }
.face { position: absolute; right: 0; top: 3px; }
.tray { margin-left: auto; margin-right: 15px; display: flex; align-items: center; font-size: 10.200px; line-height: 13.500px; }
.tray svg { margin-right: 6.500px; }
.tray .mute { margin-right: 5px; }
.lang { width: 24px; margin: 0 13px 0 2px; text-align: center; letter-spacing: -.3px; }
.clock { width: 57px; text-align: right; letter-spacing: -.3px; white-space: nowrap; }
.badge { width: 16px; height: 14px; margin-left: 9px; border-radius: 7px; background: #f17462; color: #35211d; text-align: center; line-height: 14px; font-size: 9px; }
```
